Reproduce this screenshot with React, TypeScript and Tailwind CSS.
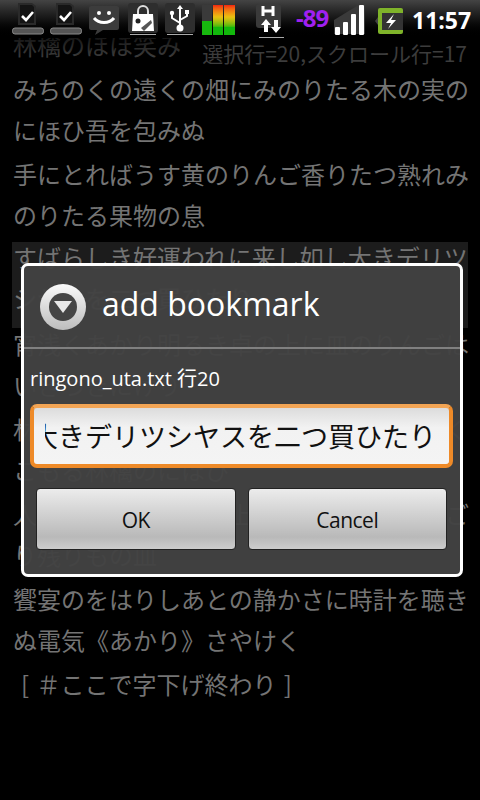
// App.tsx
const cjk = "font-['Noto_Sans_CJK_JP','Noto_Sans',sans-serif]";
const droid = "font-['Open_Sans','Noto_Sans_CJK_JP',sans-serif]";

const paragraphs = [
  { lines: ["林檎のほほ笑み"] },
  { lines: ["みちのくの遠くの畑にみのりたる木の実の", "にほひ吾を包みぬ"] },
  { lines: ["手にとればうす黄のりんご香りたつ熟れみ", "のりたる果物の息"] },
  { lines: ["すばらしき好運われに来し如し大きデリツ", "シヤスを二つ買ひたり"], selected: true },
  { lines: ["宵浅くあかり明るき卓の上に皿のりんごは", "いきづきにけり"] },
  { lines: ["林檎むく妻の指さきほのかにもうつくしく", "こもる林檎のにほひ"] },
  { lines: ["人去りしのちの卓の上にむかれたるりんご", "り残りもの皿"] },
  { lines: ["饗宴のをはりしあとの静かさに時計を聴き", "ぬ電気《あかり》さやけく"] },
];

function CheckTray() {
  return (
    <svg viewBox="0 0 32 32" className="w-8 h-8 mr-[6px]">
      <path d="M6 0h14l4 3v19H6z" fill="#2a2a2a" />
      <path d="M8 2h12l2 2v16H8z" fill="#141414" />
      <path d="M10 13l4 4 7-8" stroke="#fff" strokeWidth="2.6" fill="none" />
      <rect x="0.5" y="25" width="31" height="6" rx="2.5" fill="#555" stroke="#8a8a8a" strokeWidth="1" />
    </svg>
  );
}

function SmileBubble() {
  return (
    <svg viewBox="0 0 32 32" className="w-8 h-8 mr-[7px]">
      <path d="M3 3h26a2 2 0 012 2v20a2 2 0 01-2 2H15l-8 5 2-5H3a2 2 0 01-2-2V5a2 2 0 012-2z" fill="#3c3c3c" />
      <circle cx="11" cy="10" r="2" fill="#fff" />
      <circle cx="21" cy="10" r="2" fill="#fff" />
      <path d="M6 15c5 6 15 6 20 0" stroke="#fff" strokeWidth="3" fill="none" />
    </svg>
  );
}

function MarketBag() {
  return (
    <svg viewBox="0 0 32 32" className="w-8 h-8 mr-[5px]">
      <rect x="1" y="0" width="30" height="30" rx="3" fill="#2e2e2e" />
      <rect x="3" y="31" width="26" height="1" fill="#aaa" />
      <path d="M11 11V8a5 5 0 0110 0v3" stroke="#ddd" strokeWidth="2" fill="none" />
      <path d="M6 11h20l1 17H5z" fill="#fff" />
      <circle cx="11" cy="18" r="2.5" fill="#222" />
      <path d="M14 25l10-8 1 3-8 8z" fill="#555" />
    </svg>
  );
}

function UsbIcon() {
  return (
    <svg viewBox="0 0 32 32" className="w-8 h-8 mr-[6px]">
      <rect x="1" y="0" width="30" height="30" rx="3" fill="#2e2e2e" />
      <rect x="3" y="31" width="26" height="1" fill="#aaa" />
      <path d="M16 2l3 4h-2v18h-2V6h-2z" fill="#fff" />
      <circle cx="16" cy="25" r="3.5" fill="#fff" />
      <path d="M16 20l-8-5v-3M16 17l7-4v-3" stroke="#fff" strokeWidth="2" fill="none" />
      <circle cx="8" cy="10" r="2.2" fill="#fff" />
      <rect x="21" y="7" width="4" height="4" fill="#fff" />
    </svg>
  );
}

function Bars() {
  return (
    <div className="flex items-stretch gap-[1px] w-[33px] h-[30px] mr-[20px] mt-[2px]">
      <div className="w-[10px] flex flex-col bg-[#3a3a3a] justify-end">
        <div className="h-[14px] bg-[#17b80e]" />
      </div>
      <div className="w-[11px] bg-gradient-to-b from-[#f02010] via-[#e8c010] via-40% to-[#12b80c] to-75%" />
      <div className="w-[11px] bg-gradient-to-b from-[#f02010] via-[#e8c010] via-40% to-[#12b80c] to-75%" />
    </div>
  );
}

function HspaIcon() {
  return (
    <svg viewBox="0 0 32 34" className="w-8 h-[34px] mr-[9px] mt-[1px]">
      <rect x="1" y="0" width="25" height="24" rx="3" fill="#3a3a3a" />
      <rect x="4" y="33" width="25" height="1" fill="#aaa" />
      <path d="M8 2v10M18 2v10M8 7h10" stroke="#fff" strokeWidth="3" fill="none" />
      <path d="M11 15l5 6h-3v7h-4v-7H6zM21 29l-5-6h3v-7h4v7h3z" fill="#fff" />
    </svg>
  );
}

function SignalIcon() {
  return (
    <svg viewBox="0 0 32 32" className="w-8 h-8 mr-[9px] mt-[1px]">
      <path d="M0 16L26 0h5v30H0z" fill="#3a3a3a" />
      <rect x="1" y="23" width="5" height="8" rx="1" fill="#fff" />
      <rect x="9" y="18" width="5" height="13" rx="1" fill="#fff" />
      <rect x="17" y="10" width="5" height="21" rx="1" fill="#fff" />
      <rect x="25" y="1" width="5" height="30" rx="1" fill="#fff" />
    </svg>
  );
}

function BatteryIcon() {
  return (
    <svg viewBox="0 0 28 28" className="w-7 h-7 mr-[9px] mt-[4px]">
      <path d="M0 14l3-4v8z" fill="#444" />
      <rect x="3" y="1" width="25" height="26" rx="2" fill="#7fb32a" />
      <rect x="7" y="6" width="21" height="17" fill="#333" />
      <path d="M19 7l-8 9h5l-3 6 8-9h-5z" fill="#fff" />
    </svg>
  );
}

function StatusBar() {
  return (
    <div className="absolute top-0 left-0 w-full h-[38px] bg-gradient-to-b from-[#444444] to-[#000000] flex items-start pl-[12px] pt-[3px] z-10">
      <CheckTray />
      <CheckTray />
      <SmileBubble />
      <MarketBag />
      <UsbIcon />
      <Bars />
      <HspaIcon />
      <span className={`${droid} text-[24px] font-bold leading-[30px] text-[#a020f0] w-[34px] mr-[4px] whitespace-nowrap tracking-[-1px]`}>-89</span>
      <SignalIcon />
      <BatteryIcon />
      <span className={`${droid} text-[23px] font-bold leading-[34px] text-white whitespace-nowrap`}>11:57</span>
    </div>
  );
}

export default function App() {
  return (
    <div className="relative w-[480px] h-[800px] bg-black overflow-hidden">
      <StatusBar />

      {/* Text view behind the dialog */}
      <div className={`pt-[24px] flex flex-col ${cjk} text-[24px] leading-[41px] text-[#747474]`}>
        {paragraphs.map((p, i) =>
          p.selected ? (
            <div key={i} className="mx-[12px] px-[1px] mt-[3.5px] -mb-[5px] pb-[10px] bg-[#1c1c1c]">
              <div className="-mt-[6px]">
                {p.lines.map((line, j) => (
                  <div key={j} className="whitespace-nowrap">{line}</div>
                ))}
              </div>
            </div>
          ) : (
            <div key={i} className="px-[13px] mb-[3px]">
              {p.lines.map((line, j) => (
                <div key={j} className="whitespace-nowrap">{line}</div>
              ))}
            </div>
          )
        )}
        <div className="pl-[21px] [word-spacing:2px] whitespace-nowrap">[ ＃ここで字下げ終わり ]</div>
      </div>

      {/* Fading edge under the status bar */}
      <div className="absolute top-[38px] left-0 w-full h-[30px] bg-gradient-to-b from-black/80 to-black/30" />

      <div className={`absolute top-[40px] right-[13px] ${cjk} text-[21px] leading-[26px] text-[#3c3c3c] whitespace-nowrap`}>
        選択行=20,スクロール行=17
      </div>

      {/* Dialog */}
      <div className="absolute left-[21px] top-[263px] w-[442px] h-[314px] rounded-[7px] border-[3px] border-white bg-[#424242]/97 flex flex-col z-20">
        <div className="h-[83px] flex items-center pl-[16px] border-b-2 border-[#808080]">
          <div className="w-[46px] h-[46px] rounded-full bg-gradient-to-b from-[#fafafa] to-[#bdbdbd] flex items-center justify-center">
            <div className="w-[28px] h-[28px] rounded-full bg-[#454545] flex items-center justify-center">
              <svg viewBox="0 0 20 14" className="w-[20px] h-[14px]">
                <path d="M1 1h18L10 13z" fill="#e8e8e8" />
              </svg>
            </div>
          </div>
          <span className={`${droid} ml-[16px] -mt-[6px] text-[32px] leading-[40px] text-white whitespace-nowrap`}>add bookmark</span>
        </div>

        <div className={`${droid} pl-[6px] mt-[15px] text-[20px] leading-[30px] text-white whitespace-nowrap`}>
          ringono_uta.txt 行20
        </div>

        <div className="ml-[6px] mr-[7px] mt-[10px] h-[64px] rounded-[7px] border-[4px] border-[#ee8a28] border-t-[#f2a454] bg-gradient-to-b from-[#dcdcdc] via-[#f2f2f2] via-35% to-[#f4f4f4] flex items-center pl-[11px] pr-[13px]">
          <div className="flex-1 flex justify-end overflow-hidden">
            <span className={`${cjk} text-[27px] leading-[40px] text-[#111] whitespace-nowrap`}>
              大きデリツシヤスを二つ買ひたり
            </span>
          </div>
        </div>

        <div className="flex gap-[12px] pl-[12px] pr-[13px] mt-[20px]">
          <button className={`${droid} flex-1 h-[62px] pt-[3px] rounded-[4px] border border-[#222] bg-gradient-to-b from-[#ececec] via-[#b9b9b9] via-80% to-[#cdcdcd] text-[21px] tracking-[-0.5px] text-[#111]`}>
            OK
          </button>
          <button className={`${droid} flex-1 h-[62px] pt-[3px] rounded-[4px] border border-[#222] bg-gradient-to-b from-[#ececec] via-[#b9b9b9] via-80% to-[#cdcdcd] text-[21px] tracking-[-0.5px] text-[#111]`}>
            Cancel
          </button>
        </div>
      </div>
    </div>
  );
}
